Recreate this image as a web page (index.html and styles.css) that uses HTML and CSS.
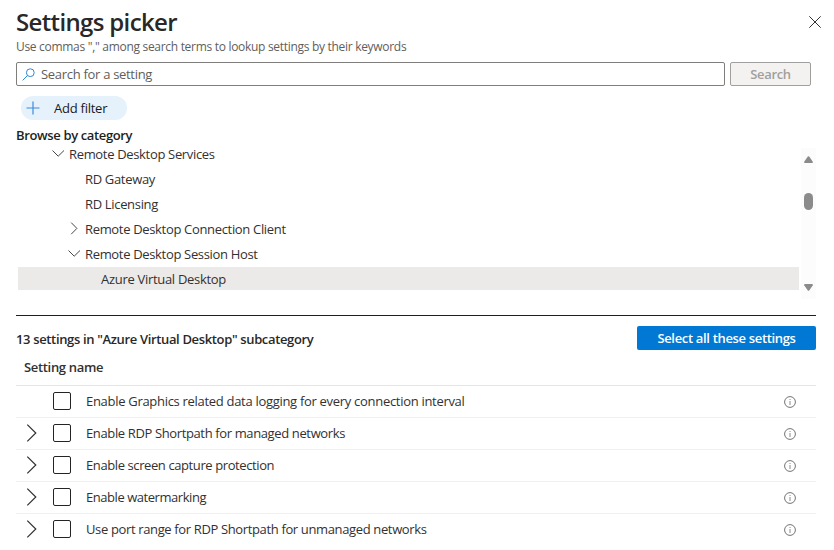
FILE: index.html
```html
<!DOCTYPE html>
<html lang="en">
<head>
<meta charset="utf-8">
<title>Settings picker</title>
<link rel="stylesheet" href="styles.css">
</head>
<body>
<svg class="defs" width="0" height="0">
  <symbol id="down" viewBox="0 0 13 9"><path d="M.5 1.5l5.7 5.7L12 1.5"/></symbol>
  <symbol id="right" viewBox="0 0 9 13"><path d="M1.2 .6l5.7 5.8-5.7 5.8"/></symbol>
  <symbol id="expand" viewBox="0 0 12 18"><path d="M1.3 .6l8.5 8.4-8.5 8.4"/></symbol>
  <symbol id="info" viewBox="0 0 12 12"><circle cx="6" cy="6" r="5.4"/><path class="info-mark" d="M6 5v4M6 3v1"/></symbol>
</svg>
<main class="panel">
  <header class="head">
    <h1><span>Settings picker</span></h1>
    <svg class="close" viewBox="0 0 12 12"><path d="M.3.3l11.4 11.4M11.7.3L.3 11.7"/></svg>
  </header>
  <p class="hint"><span>Use commas "," among search terms to lookup settings by their keywords</span></p>
  <div class="search">
    <div class="search-box">
      <svg viewBox="0 0 13 13"><circle cx="8.3" cy="4.7" r="3.9"/><path d="M5.4 7.6L.6 12.4"/></svg>
      <span class="placeholder">Search for a setting</span>
    </div>
    <button class="search-btn"><span>Search</span></button>
  </div>
  <button class="filter"><svg viewBox="0 0 14 14"><path d="M7 .5v13M.5 7h13"/></svg><span>Add filter</span></button>
  <h2 class="browse"><span>Browse by category</span></h2>
  <section class="tree-area">
    <ul class="tree">
      <li class="l1"><svg class="down"><use href="#down"/></svg><span>Remote Desktop Services</span></li>
      <li class="l2"><span>RD Gateway</span></li>
      <li class="l2"><span>RD Licensing</span></li>
      <li class="l2"><svg class="right"><use href="#right"/></svg><span>Remote Desktop Connection Client</span></li>
      <li class="l2"><svg class="down"><use href="#down"/></svg><span>Remote Desktop Session Host</span></li>
      <li class="l3 selected"><span>Azure Virtual Desktop</span></li>
    </ul>
    <div class="scrollbar">
      <svg class="arrow" viewBox="0 0 9 7"><path d="M3.8.6q.7-.9 1.4 0L8.8 5.8Q9 7 8 7H1Q0 7 .2 5.8z"/></svg>
      <div class="thumb"></div>
      <svg class="arrow" viewBox="0 0 9 7"><path d="M3.8 6.4q.7.9 1.4 0L8.8 1.2Q9 0 8 0H1Q0 0 .2 1.2z"/></svg>
    </div>
  </section>
  <section class="results">
    <div class="summary">
      <h2><span>13 settings in "Azure Virtual Desktop" subcategory</span></h2>
      <button class="select-all"><span>Select all these settings</span></button>
    </div>
    <div class="column"><span>Setting name</span></div>
    <ul class="settings">
      <li><i class="expand"></i><i class="check"></i><span class="s1">Enable Graphics related data logging for every connection interval</span><svg class="info"><use href="#info"/></svg></li>
      <li><svg class="expand"><use href="#expand"/></svg><i class="check"></i><span class="s2">Enable RDP Shortpath for managed networks</span><svg class="info"><use href="#info"/></svg></li>
      <li><svg class="expand"><use href="#expand"/></svg><i class="check"></i><span class="s3">Enable screen capture protection</span><svg class="info"><use href="#info"/></svg></li>
      <li><svg class="expand"><use href="#expand"/></svg><i class="check"></i><span class="s4">Enable watermarking</span><svg class="info"><use href="#info"/></svg></li>
      <li><svg class="expand"><use href="#expand"/></svg><i class="check"></i><span class="s5">Use port range for RDP Shortpath for unmanaged networks</span><svg class="info"><use href="#info"/></svg></li>
    </ul>
  </section>
</main>
</body>
</html>
```
FILE: styles.css
```css
* { box-sizing: border-box; }
body {
  margin: 0;
  background: #fff;
  color: #323130;
  font: 13px/20px "Open Sans", "Noto Sans", sans-serif;
  letter-spacing: -0.33px;
  white-space: nowrap;
  overflow: hidden;
}
h1, h2, p, ul { margin: 0; padding: 0; }
ul { list-style: none; }
button { font: inherit; letter-spacing: inherit; border: 0; padding: 0; }
svg { display: block; fill: none; stroke: #484644; stroke-width: 1; flex: none; }
.defs { position: absolute; }
.panel { height: 550px; padding: 6px 18px 0 16px; }

.head { display: flex; justify-content: space-between; height: 32px; }
h1 { font-size: 24px; line-height: 31px; font-weight: 600; color: #292827; letter-spacing: -0.65px; }
.close { width: 12px; height: 12px; margin: 10px -5px 0 0; stroke: #323130; }
.hint { height: 24px; font-size: 12px; line-height: 17px; color: #605e5c; letter-spacing: -0.3px; }

.search { display: flex; gap: 5px; height: 24px; }
.search-box { width: 709px; border: 1px solid #7f7e7c; border-radius: 2px; display: flex; align-items: center; padding-left: 5px; gap: 6px; color: #605e5c; letter-spacing: -0.3px; }
.search-box svg { width: 13px; height: 13px; stroke: #2b88d8; }
.search-btn { width: 81px; background: #f3f2f1; border: 1px solid #a19f9d; border-radius: 2px; color: #a19f9d; font-weight: 600; line-height: 21px; letter-spacing: -0.5px; }
.search-btn, .select-all { letter-spacing: -0.33px; }

.filter { display: flex; align-items: center; gap: 14px; width: 106px; height: 24px; margin: 10px 0 0 5px; padding-left: 5px; border-radius: 12px; background: #e5f1fb; color: #1b1a19; letter-spacing: -0.25px; }
.filter svg { width: 14px; height: 14px; stroke: #3f8ae0; stroke-width: 1.2; }
.browse { height: 23px; margin-top: 5px; font-size: 13px; line-height: 20px; font-weight: 600; color: #201f1e; letter-spacing: -0.36px; }

.tree-area { display: flex; justify-content: space-between; height: 151px; padding-left: 2px; }
.tree { width: 781px; margin-top: -6px; }
.tree li { display: flex; align-items: center; height: 23px; margin-bottom: 2px; }
.tree .l1 { padding-left: 34px; }
.tree .l2 { padding-left: 67px; }
.tree .l3 { padding-left: 83px; letter-spacing: -0.3px; }
.tree .selected { background: #ebeae8; }
.down { width: 13px; height: 9px; margin-right: 4px; }
.right { width: 9px; height: 13px; margin-right: 6px; }
.l2 .down { margin-left: -17px; }
.l2 .right { margin-left: -15px; }
.scrollbar { width: 15px; background: #fcfcfc; display: flex; flex-direction: column; align-items: center; padding: 8px 0; }
.arrow { width: 9px; height: 7px; fill: #8b8b8b; stroke: none; }
.thumb { width: 9px; height: 17px; border-radius: 5px; background: #8b8b8b; margin: 30px 0 74px; }

.results { margin-top: 16px; border-top: 1px solid #201f1e; }
.summary { display: flex; justify-content: space-between; height: 41px; padding-top: 10px; width: 800px; }
.summary h2 { font-size: 13px; line-height: 26px; font-weight: 600; color: #292827; letter-spacing: -0.35px; }
.select-all { width: 179px; height: 24px; background: #0078d4; color: #fff; border-radius: 2px; font-weight: 600; line-height: 23px; }
.column { height: 28px; padding-left: 8px; line-height: 20px; font-weight: 600; }
.settings { width: 800px; }
.settings li { display: flex; align-items: center; height: 32px; padding-bottom: 2px; border-top: 1px solid #f0efee; }
.settings li:first-child { border-top-color: #e6e5e4; }
.expand { width: 12px; height: 18px; margin: 0 15px 0 10px; stroke: #323130; stroke-width: 1.2; }
.check { width: 18px; height: 18px; border: 1px solid #252423; border-radius: 2px; margin-right: 15px; flex: none; }
.info { width: 12px; height: 12px; margin: 2px 20px 0 auto; stroke: #757371; }
.info-mark { stroke: #a7a5a3; stroke-width: 1.3; }
.s1 { letter-spacing: -0.3px; }
.s2 { letter-spacing: -0.37px; }
.s3 { letter-spacing: -0.4px; }
.s4 { letter-spacing: -0.45px; }
.s5 { letter-spacing: -0.36px; }
```
